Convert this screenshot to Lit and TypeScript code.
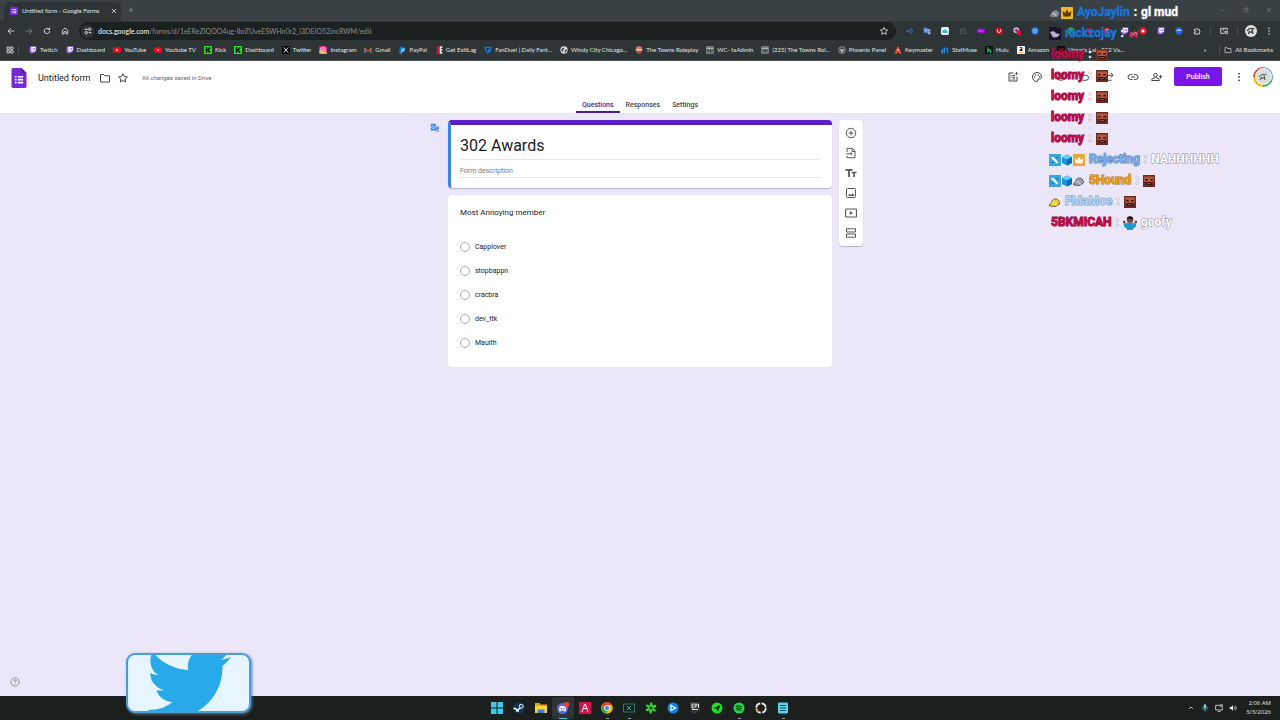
import { LitElement, html, css, svg, nothing, SVGTemplateResult } from "lit";
import { customElement } from "lit/decorators.js";
import { classMap } from "lit/directives/class-map.js";

type Art = SVGTemplateResult;

const line = (d: string, w = 2): Art =>
  svg`<path d=${d} fill="none" stroke="currentColor" stroke-width=${w} stroke-linejoin="round" />`;
const fill = (d: string, color = "currentColor"): Art => svg`<path d=${d} fill=${color} />`;

const pic = (art: Art, size = "s8") =>
  html`<svg class="pic ${size}" viewBox="0 0 24 24" aria-hidden="true">${art}</svg>`;

/* Interface glyphs */
const star = line("M12 3.5l2.6 5.6 6.1.7-4.5 4.2 1.2 6L12 17l-5.400 3 1.200-6L3.300 9.800l6.100-.7z");
const forms = svg`<path d="M5 0h10l6 6v16a2 2 0 0 1-2 2H5a2 2 0 0 1-2-2V2a2 2 0 0 1 2-2z" fill="#7627d6"/>
  <path d="M15 0l6 6h-6z" fill="#4d1a9c"/>
  <path d="M7 9.500h2v2H7zm3.500 0H17v2h-6.500zM7 13h2v2H7zm3.500 0H17v2h-6.500zM7 16.500h2v2H7zm3.500 0H17v2h-6.500z" fill="#fff"/>`;
const g = {
  back: line("M22 12H4M12 3l-9 9 9 9", 2.600),
  forward: line("M2 12h18M12 3l9 9-9 9", 2.600),
  reload: line("M20 12a8 8 0 1 1-2.500-5.800M20 2v6h-6", 2.800),
  home: line("M4 10l8-7 8 7v11h-5v-7H9v7H4z", 2.600),
  tune: svg`${line("M2 7h9M14 17h8", 3)}<circle cx="17" cy="7" r="3.500" fill="none" stroke="currentColor" stroke-width="3"/><circle cx="7" cy="17" r="3.500" fill="none" stroke="currentColor" stroke-width="3"/>`,
  close: line("M4 4l16 16M20 4L4 20", 3),
  plus: line("M12 3v18M3 12h18", 2.600),
  minimise: line("M4 12h16", 2.400),
  restore: line("M4 8h12v12H4zM8 8V4h12v12h-4", 2.400),
  puzzle: line("M4 7h5a2.500 2.500 0 1 1 5 0h5v5a2.500 2.500 0 1 1 0 5v4H4v-5a2.500 2.500 0 1 0 0-4z", 2.600),
  media: svg`${line("M13 19H2V4h20v6", 2.600)}${line("M15 13h7v6h-7zM7 9h6M20 20l2 2", 2.600)}`,
  dots: svg`<circle cx="12" cy="4" r="2.200" fill="currentColor"/><circle cx="12" cy="12" r="2.200" fill="currentColor"/><circle cx="12" cy="20" r="2.200" fill="currentColor"/>`,
  apps: line("M3 3h7v7H3zM14 3h7v7h-7zM3 14h7v7H3zM14 14h7v7h-7z", 2.400),
  folder: line("M3 5h6l2 2.500h10V20H3z"),
  aiForm: svg`${line("M13 4H4v16h16v-9M11 9h5M11 12.500h5M11 16h5")}${fill("M7 8h2v2H7zm0 3.500h2v2H7zM7 15h2v2H7zM19 1l1.200 2.800L23 5l-2.800 1.200L19 9l-1.200-2.800L15 5l2.800-1.200z")}`,
  palette: svg`${line("M12 3a9 9 0 1 0 0 18c1.500 0 2-1 1.600-2.200-.6-1.800.4-2.800 1.900-2.800H18c2 0 3-2 3-4.500C21 6.500 17 3 12 3z")}<circle cx="7" cy="12" r="1.500" fill="currentColor"/><circle cx="9.500" cy="8" r="1.500" fill="currentColor"/><circle cx="14.500" cy="8" r="1.500" fill="currentColor"/><circle cx="17.500" cy="11.500" r="1.500" fill="currentColor"/>`,
  eye: svg`${line("M1.500 12C5 3.500 19 3.500 22.500 12 19 20.500 5 20.500 1.500 12z")}<circle cx="12" cy="12" r="3.500" fill="none" stroke="currentColor" stroke-width="2"/>`,
  undo: line("M8 4L4 8.500 8 13M4 8.500h10a5 5 0 0 1 0 10H7"),
  redo: line("M16 4l4 4.500-4 4.500M20 8.500H10a5 5 0 0 0 0 10h7"),
  link: line("M10.500 7H7a5 5 0 0 0 0 10h3.500M13.500 7H17a5 5 0 0 1 0 10h-3.500M8 12h8"),
  addPerson: svg`<circle cx="9" cy="8" r="3.500" fill="none" stroke="currentColor" stroke-width="2"/>${line("M1.500 19v-1.500c0-3 4-4 7.500-4s7.500 1 7.500 4V19zM19 8v7M15.500 11.500h7")}`,
  addItem: svg`<circle cx="12" cy="12" r="9.500" fill="none" stroke="currentColor" stroke-width="2"/>${line("M12 7v10M7 12h10")}`,
  importItem: line("M4 10V2.500h10.500L20 8v13.500H4V17M14 3v6h6M3 13.500h11M11 10.500l3 3-3 3"),
  text: fill("M1 4h14v3.500H9.800V20H6.200V7.500H1zM13 9.500h10v3h-3.300V20h-3.400v-7.500H13z"),
  image: svg`<rect x="3" y="3" width="18" height="18" rx="2" fill="none" stroke="currentColor" stroke-width="2"/>${fill("M6 18l3.500-4.500 2.300 2.800 3.200-4.300L19 18z")}`,
  video: svg`<rect x="1" y="4" width="22" height="16" rx="2" fill="none" stroke="currentColor" stroke-width="2.400"/>${fill("M9.500 8v8l6.500-4z")}`,
  section: line("M3 3.500h18v6.500H3zM3 14h18v6.500H3z"),
  help: svg`<circle cx="12" cy="12" r="10" fill="none" stroke="currentColor" stroke-width="1.800"/>${line("M9 9.500c0-4 6-4 6 0 0 2.500-3 2.500-3 5.200M12 16.500v2.200", 1.800)}`,
  translate: svg`${fill("M2 2h11l4 16H2z", "#3f7fe0")}${fill("M12 7h10v15H13l3-5z", "#9dbdf0")}${line("M10.500 7.500a3.500 3.500 0 1 0 .5 3.500H8", 1.600)}${fill("M15 11h6v2h-1l-2 4-1.500-1 1.500-3h-3z", "#3766b8")}`,
  caret: line("M4 16l8-8 8 8", 3),
  mic: svg`<rect x="8" y="1" width="8" height="13" rx="4" fill="#7fd4dc"/><path d="M4 10c0 10 16 10 16 0M12 18v5" fill="none" stroke="#5fb4be" stroke-width="2.400"/>`,
  screen: line("M15 4H2v14h20v-7M8 22h9M17 2h5v6h-5z", 2.400),
  volume: svg`${fill("M2 9h4l6-5v16l-6-5H2z")}${line("M15 8c2 2 2 6 0 8M18.500 5c4 4 4 10 0 14", 2.200)}`,
};

/* Site and app marks */
const tile = (bg: string, inner: Art | typeof nothing = nothing, rx = 3): Art =>
  svg`<rect width="24" height="24" rx=${rx} fill=${bg} />${inner}`;
const disc = (bg: string, inner: Art | typeof nothing = nothing): Art =>
  svg`<circle cx="12" cy="12" r="11" fill=${bg} />${inner}`;
const twitch = svg`<path d="M5 1h17v13l-6 6h-4l-4 4v-4H2V5z" fill="#a970ff"/><path d="M7 3h13v10l-3 3h-5l-3 3v-3H7z" fill="#fff"/><path d="M11 6h2v6h-2zm5 0h2v6h-2z" fill="#7a3ee0"/>`;
const youtube = svg`<rect y="4" width="24" height="16" rx="5" fill="#f00a1c"/><path d="M10 8.500v7l6-3.500z" fill="#fff"/>`;
const kick = tile("#20e81c", fill("M5 3h5v6h2V7h2V3h5v6h-2v2h-2v2h2v2h2v6h-5v-4h-2v-2h-2v6H5z", "#071407"), 0);
const crown = (bg: string, c: string) => tile(bg, fill("M3 8l5 4 4-7 4 7 5-4-2 11H5z", c), 1);
const bird =
  "M23.953 4.570a10 10 0 01-2.825.775 4.958 4.958 0 002.163-2.723c-.951.555-2.005.959-3.127 1.184a4.920 4.920 0 00-8.384 4.482C7.690 8.095 4.067 6.130 1.640 3.162a4.822 4.822 0 00-.666 2.475c0 1.710.870 3.213 2.188 4.096a4.904 4.904 0 01-2.228-.616v.06a4.923 4.923 0 003.946 4.827 4.996 4.996 0 01-2.212.085 4.936 4.936 0 004.604 3.417 9.867 9.867 0 01-6.102 2.105c-.39 0-.779-.023-1.170-.067a13.995 13.995 0 007.557 2.209c9.053 0 13.998-7.496 13.998-13.985 0-.21 0-.42-.015-.63A9.935 9.935 0 0024 4.590z";
const serverBox = tile("#6d7678", svg`${line("M2 7h20", 2)}${fill("M5 11h4v4H5zm7 0h3v8h-3zm5 0h3v3h-3z", "#252b2d")}`);

const bookmarks: [string, Art][] = [
  ["Twitch", twitch],
  ["Dashboard", twitch],
  ["YouTube", youtube],
  ["Youtube TV", youtube],
  ["Kick", kick],
  ["Dashboard", kick],
  ["Twitter", tile("#050505", svg`<path d="M5 4l14 16M19 4L5 20" stroke="#fff" stroke-width="2.500"/>`, 1)],
  ["Instagram", svg`<rect width="24" height="24" rx="6" fill="#e1308a"/><path d="M0 14l24 5v5H6a6 6 0 0 1-6-6z" fill="#fb9a36"/><rect x="5" y="5" width="14" height="14" rx="4" fill="none" stroke="#fff" stroke-width="2"/><circle cx="12" cy="12" r="3.500" fill="none" stroke="#fff" stroke-width="2"/>`],
  ["Gmail", svg`<path d="M1 5h5v15H1z" fill="#4285f4"/><path d="M18 5h5v15h-5z" fill="#34a853"/><path d="M1 5l11 8 11-8v5l-11 8L1 10z" fill="#ea4335"/>`],
  ["PayPal", svg`<path d="M6 2h9c8 0 6 12-3 12H9l-1 6H2z" fill="#1b6fd8"/><path d="M11 7h8c5 2 2 11-5 11h-2l-1 5H7z" fill="#54c3f5"/>`],
  ["Get ExitLag", svg`<path d="M2 1h11v22H2l4-11z" fill="#c4122f"/><path d="M14 1h8v5h-3v4h3v4h-3v4h3v5h-8z" fill="#f4f4f4"/>`],
  ["FanDuel | Daily Fant...", svg`<path d="M1 2h22l-3 13-8 8-8-8z" fill="#1477e6"/><path d="M7 6h11l-2 4h-4l-1 8-3-4z" fill="#26323c"/>`],
  ["Windy City Chicago...", disc("#d9dcdc", fill("M5 8l6-4 2 5-4 4-1 6-4-5zM15 13l5-3 1 4-5 6-3-3z", "#4a5254"))],
  ["The Towns Roleplay", svg`<ellipse cx="12" cy="7" rx="9" ry="6" fill="#d97e5c"/><path d="M2 10h20v4H2z" fill="#f3e6dc"/><path d="M4 15h16l-3 8H7z" fill="#c44d3a"/>`],
  ["WC- txAdmin", serverBox],
  ["(225) The Towns Rol...", serverBox],
  ["Phoenix Panel", svg`<circle cx="12" cy="12" r="10" fill="none" stroke="#c6caca" stroke-width="2"/>${fill("M6 7l6 4 6-4-2 9-4 4-4-4z", "#c6caca")}`],
  ["Keymaster", svg`<path d="M12 1l5 8 5 14h-6l-4-6-4 6H2L7 9z" fill="#ee4b3c"/><path d="M10 9h4v4h-4z" fill="#fff"/>`],
  ["StatMuse", svg`<path d="M1 10h5v12H1zM8 5h4v17H8z" fill="#2f8fe8"/><path d="M14 3l8 3v16h-5V11h-3z" fill="#1d6fd0"/>`],
  ["Hulu", tile("#04120a", fill("M7 4h3v6c8-2 8 2 8 10h-3c0-6 0-8-5-6v6H7z", "#1ce783"), 1)],
  ["Amazon", tile("#fff", svg`${fill("M8 4h8v11h-3l-5-1v-5h5V6H8z", "#111")}<path d="M4 18q8 5 16 0" fill="none" stroke="#f90" stroke-width="2.500"/>`, 2)],
  ["Vimm's Lair: PS2 Va...", tile("#170508", fill("M4 5l8 14 8-14-4 2-4 7-4-7z", "#d6182c"), 1)],
];

const extensions: Art[] = [
  svg`<circle cx="7" cy="12" r="3" fill="#3d8be8"/><path d="M12 6c4 3 4 9 0 12M17 3c6 5 6 13 0 18" fill="none" stroke="#2f78d6" stroke-width="3"/>`,
  g.translate,
  tile("#e9f9fb", fill("M4 17c-3-6 3-8 4-7 2-5 10-3 9 2 5 0 4 6 1 6z", "#31bdd6"), 5),
  svg`<path d="M4 11h16v9H4zM4 9c3-7 10-1 16-6" fill="none" stroke="#596063" stroke-width="2.500"/>`,
  svg`<rect y="5" width="24" height="14" rx="3" fill="#a30bd8"/><path d="M5 11h9v2H5zm12 0h3v2h-3z" fill="#fff"/>`,
  disc("#c90f1e", svg`<path d="M7 7v5c0 6 10 6 10 0V7" fill="none" stroke="#fff" stroke-width="2.500"/>`),
  svg`<circle cx="10" cy="10" r="9" fill="#d9a5d8"/><circle cx="10" cy="10" r="4" fill="#5c3e7c"/><rect x="11" y="10" width="13" height="14" rx="3" fill="#e00b40"/>`,
  disc("#1f73dd", svg`<circle cx="12" cy="12" r="6" fill="none" stroke="#bfe0ff" stroke-width="2"/><path d="M8 12h8" stroke="#bfe0ff" stroke-width="2"/>`),
  tile("#17111f", fill("M3 8l6-2 7 5 6 1-5 6-9 1z", "#c9c2d6"), 0),
  disc("#23a559", fill("M5 12c4-5 10-5 14 0v4H5z", "#dff5e5")),
  svg`<path d="M12 22L2 11c0-9 8-9 10-4 2-5 10-5 10 4z" fill="#c61c50"/>`,
  disc("#cc1622", fill("M8 6h8v3h-5v3h5v6H8v-3h5v-1H8z", "#fff")),
  twitch,
  disc("#e0182d", fill("M8 8h8v8H8z", "#fff")),
  twitch,
  disc("#2463e8", fill("M4 13c2-7 14-7 16 0-4-3-12-3-16 0z", "#fff")),
];

const tasks: { name: string; art: Art; on?: boolean; run?: boolean }[] = [
  { name: "Start", art: fill("M0 0h11v11H0zM13 0h11v11H13zM0 13h11v11H0zM13 13h11v11H13z", "#3fc8ec") },
  { name: "Steam", art: svg`<circle cx="12" cy="12" r="11" fill="#12395c"/><path d="M1 12l9 4 7-7" fill="none" stroke="#e5eef5" stroke-width="3"/><circle cx="16.500" cy="8.500" r="4" fill="#1b4f79" stroke="#e5eef5" stroke-width="2"/><circle cx="9" cy="17" r="3" fill="#e5eef5"/>` },
  { name: "File Explorer", art: svg`<path d="M0 2h9l2 3h13v17H0z" fill="#e2a90f"/><path d="M0 8h24v14H0z" fill="#ffd43a"/><path d="M5 15h14v7H5z" fill="#2f89d8"/>` },
  { name: "Discord", on: true, art: svg`<circle cx="11" cy="13" r="11" fill="#5865f2"/><path d="M4 18c0-6 1-9 3-10h8c2 1 3 4 3 10l-3 1-1-2H8l-1 2z" fill="#fff"/><path d="M7.500 12h2.500v3H7.500zm5 0H15v3h-2.500z" fill="#5865f2"/><circle cx="19" cy="5" r="5.500" fill="#e8404a"/>` },
  { name: "Launcher", art: tile("#d3124e", svg`<path d="M6 20l5-15h2l5 15M8 13h8" fill="none" stroke="#fff" stroke-width="2"/>`, 1) },
  { name: "Chrome", run: true, art: svg`<circle cx="12" cy="12" r="11.500" fill="#fbbc05"/><path d="M2 6a11.500 11.500 0 0 1 20 0H12l-5 9z" fill="#ea4335"/><path d="M2 6a11.500 11.500 0 0 0 8 17.300l5-8.300-7 0z" fill="#34a853"/><circle cx="12" cy="12" r="5.500" fill="#fff"/><circle cx="12" cy="12" r="4.200" fill="#3b82ea"/>` },
  { name: "Capture", run: true, art: svg`<rect x="1" y="4" width="22" height="16" fill="#12221f" stroke="#3a7c71" stroke-width="1.800"/><path d="M8 8l8 8M16 8l-8 8" stroke="#4aa596" stroke-width="2"/>` },
  { name: "Razer", art: svg`<path d="M12 0q5 3 2 8 5-4 9-1-1 5-7 5 5 1 6 6-5 3-8-3 1 5-2 9-5-3-3-8-4 4-8 1 1-5 7-5-6-1-7-6 5-3 9 2-1-5 2-8z" fill="#35d22f"/><circle cx="12" cy="12" r="2.500" fill="#1c1f1e"/>` },
  { name: "Battle.net", art: disc("#0f86ea", svg`<path d="M8 5v13M8 7l9 5-9 5" fill="none" stroke="#fff" stroke-width="2.400"/>`) },
  { name: "Epic Games", art: svg`<path d="M2 0h20v18l-10 6-10-6z" fill="#343638"/><path d="M6 4h4M6 4v8h4M6 8h3M12 12V4h4v4h-4M19 4v8" fill="none" stroke="#fff" stroke-width="1.600"/><path d="M6 15h12" stroke="#fff" stroke-width="1.600"/>` },
  { name: "Navigator", art: disc("#22dd36", fill("M5 12l14-6-5 13-3-5z", "#0b2e10")) },
  { name: "Spotify", run: true, art: disc("#1fdd4c", svg`<path d="M5 8.500q8-2 14 1M6 12.500q7-2 12 1M7 16q6-1.500 10 1" fill="none" stroke="#0b2010" stroke-width="2"/>`) },
  { name: "Recorder", art: svg`<circle cx="12" cy="12" r="9.500" fill="none" stroke="#f2f2f2" stroke-width="3.500" stroke-dasharray="12 3"/><path d="M3 12a9 9 0 0 0 4 8" fill="none" stroke="#f08a4c" stroke-width="3.500"/>` },
  { name: "Notepad", run: true, art: svg`<rect x="2" y="1" width="20" height="22" rx="2" fill="#5bd0ea"/><path d="M6 7h12M6 12h12M6 17h12" stroke="#12536a" stroke-width="2"/>` },
];

/* Chat marks */
const face = tile("#6b2920", svg`<path d="M2 3h20v9l-3 2H5l-3-2z" fill="#b9593e"/><path d="M4 7l6 2v2H4zm16 0l-6 2v2h6z" fill="#3b1512"/><path d="M6 16q6-4 12 0v3H6z" fill="#1f0b0c"/><path d="M8 17h8v1H8z" fill="#d8a58e"/>`, 0);
const cap = (c: string) => svg`<path d="M5 14c0-11 17-11 16 2l-8 5-12-1c-1-4 2-5 4-6z" fill=${c} stroke="#3f4148" stroke-width="1.500"/><path d="M5 14c5-2 9 1 10 5" fill="none" stroke="#fff" stroke-width="1.500"/>`;
const clip = tile("#35a8dc", svg`<path d="M4 6h5l10 11-3 2L6 10z" fill="#fff"/><path d="M15 6h4v3h-4zM5 15h4v3H5z" fill="#1273a5"/>`, 0);
const cube = svg`<path d="M12 1l10 5v12l-10 5-10-5V6z" fill="#1c93d8"/><path d="M12 1l10 5-10 5L2 6z" fill="#65cdf5"/><path d="M12 11l10-5v12l-10 5z" fill="#0d6cae"/>`;
const shrug = svg`<path d="M1 11l4 2 3-2h8l3 2 4-2-1 8-4 2-1 3H7l-1-3-4-2z" fill="#2596c8"/><circle cx="12" cy="6.500" r="5.500" fill="#7b4a3b"/><path d="M6.500 5c0-6 11-6 11 0z" fill="#20191a"/><path d="M0 8h4v4H0zm20 0h4v4h-4z" fill="#7b4a3b"/>`;
const squiggle = svg`<path d="M2 21l3-15 4 9 4-12 2 11 7-10-5 17-5-7-4 7-2-5z" fill="#e0315e"/><path d="M8 9l3 4M15 8l2 4" stroke="#ffc2cf" stroke-width="2"/>`;

const chat: { badges?: Art[]; user: string; tone: string; emote?: Art; text?: string }[] = [
  { badges: [cap("#85898f"), crown("#f1b62c", "#5a3b05")], user: "AyoJaylin", tone: "blue", text: "gl mud" },
  { badges: [tile("#1a1330", fill("M2 8l7-2 6 5 7 1-5 6-9 1z", "#b9b1cc"), 0)], user: "rackzojay", tone: "blue", emote: squiggle },
  ...Array.from({ length: 5 }, () => ({ user: "loomy", tone: "crimson", emote: face })),
  { badges: [clip, cube, crown("#e7a73a", "#fff5dc")], user: "Rejecting", tone: "steel", text: "NAHHHHHH" },
  { badges: [clip, cube, cap("#9a9db0")], user: "5Hound", tone: "amber", emote: face },
  { badges: [cap("#f0d021")], user: "FMaMoe", tone: "pale", emote: face },
  { user: "5BKMICAH", tone: "crimson", emote: shrug, text: "goofy" },
];

@customElement("app-root")
export class AppRoot extends LitElement {
  static styles = css`
    :host {
      display: flex;
      flex-direction: column;
      min-height: 100vh;
      position: relative;
      overflow: hidden;
      background: #ebe7f8;
      color: #202124;
      font-family: Roboto, "Liberation Sans", sans-serif;
      font-size: 7px;
      line-height: 10px;
    }
    * { box-sizing: border-box; }
    button, input {
      margin: 0;
      padding: 0;
      border: 0;
      background: none;
      color: inherit;
      font: inherit;
      outline: none;
    }
    button { display: flex; align-items: center; justify-content: center; flex: none; }
    a { color: inherit; text-decoration: none; }
    .pic { display: block; flex: none; }
    .s6 { width: 6px; height: 6px; }
    .s8 { width: 8px; height: 8px; }
    .s10 { width: 10px; height: 10px; }
    .s12 { width: 12px; height: 12px; }
    .s14 { width: 14px; height: 14px; }
    .s20 { width: 20px; height: 20px; }

    .chrome {
      background: #2d3537;
      color: #e3e6e6;
      font-family: Lato, "Open Sans", sans-serif;
      border-bottom: 1px solid #4b5355;
    }
    .tabstrip { display: flex; height: 21px; padding: 2px 0 0 4px; background: #394144; }
    .tab {
      display: flex;
      align-items: center;
      gap: 4px;
      width: 117px;
      padding: 0 4px 2px 6px;
      border-radius: 5px 5px 0 0;
      background: #2d3537;
      font-size: 6px;
      white-space: nowrap;
    }
    .tab .label { flex: 1; }
    .newtab { width: 20px; height: 16px; color: #9da3a4; }
    .window { display: flex; margin-left: auto; color: #737a7c; }
    .window button { width: 23px; height: 16px; }
    .toolbar { display: flex; align-items: center; height: 20px; padding: 0 2px; }
    .nav { width: 18px; height: 18px; }
    .dim { color: #798082; }
    .omnibox {
      display: flex;
      align-items: center;
      flex: 1;
      height: 18px;
      margin: 0 4px 0 5px;
      padding: 0 7px 0 2px;
      gap: 4px;
      border-radius: 9px;
      background: #1b2021;
      font-size: 7px;
    }
    .site { width: 13px; height: 13px; border-radius: 50%; background: #2d3537; }
    .url { flex: 1; color: #8b9293; white-space: nowrap; }
    .url b { color: #eef0f0; font-weight: 500; }
    .rule { width: 1px; height: 8px; background: #4a5254; margin: 0 4px; }
    .person { width: 12px; height: 12px; border-radius: 50%; background: #dfe1e1; color: #333; }
    .bookbar { display: flex; align-items: center; height: 19px; padding: 0 7px 1px 6px; font-size: 6px; white-space: nowrap; }
    .books { display: flex; gap: 8px; margin: 0; padding: 0 0 0 6px; list-style: none; flex: 1; min-width: 0; overflow: hidden; }
    .book { display: flex; align-items: center; gap: 3px; }
    .more { width: 20px; height: 16px; }

    .header { background: #fff; height: 52px; display: flex; flex-direction: column; justify-content: space-between; }
    .bar { display: flex; align-items: center; height: 34px; padding: 0 7px 0 9px; color: #444746; }
    .name { width: 54px; margin: 0 4px 0 9px; font-size: 9px; line-height: 14px; color: #202124; }
    .act { width: 18px; height: 18px; }
    .saved { margin-left: 10px; flex: 1; font-size: 6px; color: #5f6368; }
    .tools { display: flex; align-items: center; align-self: flex-start; height: 31px; }
    .edit { display: flex; gap: 6px; }
    .publish {
      width: 48px;
      height: 19px;
      margin: 0 8px;
      border-radius: 2px;
      background: #7816ea;
      color: #fff;
      font-weight: 500;
    }
    .avatar {
      width: 20px;
      height: 20px;
      margin-left: 5px;
      border-radius: 50%;
      background: conic-gradient(#4285f4 0 25%, #34a853 0 50%, #fbbc05 0 75%, #ea4335 0);
    }
    .avatar .inner { display: grid; place-items: center; width: 17px; height: 17px; border-radius: 50%; background: #d9dddb; border: 1px solid #fff; }
    .views { display: flex; justify-content: center; height: 16px; }
    .view { height: 16px; padding: 0 6px; font-weight: 500; color: #444746; border-bottom: 2px solid transparent; line-height: 16px; }
    .view.on { color: #4c1d9a; border-color: #4c1d9a; }

    .canvas { flex: 1; display: flex; flex-direction: column; justify-content: space-between; }
    .grid { display: grid; grid-template-columns: 1fr minmax(0, 384px) 1fr; gap: 7px; padding-top: 7px; align-items: start; }
    .trans { justify-self: end; width: 12px; height: 16px; color: #fff; }
    .form { display: flex; flex-direction: column; gap: 7px; }
    .card { background: #fff; border-radius: 4px; padding: 12px; box-shadow: 0 1px 1px #b9b4cc; }
    .head {
      position: relative;
      height: 68px;
      border-top: 5px solid #5d1fcb;
      border-left: 3px solid #3b86dc;
      padding: 10px 12px 11px 9px;
    }
    .title, .desc { display: block; width: 100%; border-bottom: 1px solid #e8e8ec; }
    .title { height: 25px; padding-bottom: 4px; font-size: 16px; line-height: 20px; }
    .desc { height: 18px; padding-top: 4px; }
    .desc::placeholder { color: #777b80; opacity: 1; }
    .question { margin: 0; border: 0; min-width: 0; height: 172px; box-shadow: 0 0 1px #d3cfe0; }
    .ask { float: left; width: 100%; padding: 0; margin-bottom: 17px; font-size: 8px; line-height: 11px; }
    .option { display: flex; align-items: center; gap: 5px; clear: both; height: 24px; }
    .option input { appearance: none; width: 10px; height: 10px; border: 1px solid #a9abae; border-radius: 50%; }
    .side {
      display: flex;
      flex-direction: column;
      width: 24px;
      padding: 3px 0;
      border-radius: 4px;
      background: #fff;
      color: #55585b;
      box-shadow: 0 1px 1px #b9b4cc;
    }
    .side button { width: 24px; height: 20px; }
    .help { width: 11px; height: 11px; margin: 0 0 9px 9px; color: #77738a; }

    .taskbar { position: relative; display: flex; align-items: center; justify-content: center; height: 24px; background: #1b1f1e; color: #e4e6e6; }
    .task { position: relative; width: 22px; height: 22px; border-radius: 3px; }
    .task.on { background: #303437; }
    .task.on::after, .task.run::after {
      content: "";
      position: absolute;
      left: 50%;
      bottom: 0;
      width: 3px;
      height: 1px;
      margin-left: -1px;
      background: #9ba0a0;
    }
    .task.on::after { width: 8px; margin-left: -4px; background: #4cc8f0; }
    .tray { position: absolute; right: 9px; top: 0; height: 24px; display: flex; align-items: center; gap: 4px; }
    .tray button { width: 10px; height: 16px; }
    .clock { margin-left: 4px; text-align: right; font: 6px/9px "Open Sans", "Noto Sans", sans-serif; }

    .chat {
      position: absolute;
      top: 2px;
      left: 1049px;
      margin: 0;
      padding: 0;
      list-style: none;
      font-size: 12px;
      line-height: 21px;
      font-weight: 700;
      white-space: nowrap;
      pointer-events: none;
    }
    .msg { display: flex; align-items: center; height: 21px; }
    .badges { display: flex; margin-right: 2px; }
    .user { padding: 0 4px 0 2px; -webkit-text-stroke: 1px #5d6480; paint-order: stroke fill; }
    .said { display: flex; align-items: center; color: #fff; -webkit-text-stroke: 1px #8d8a99; paint-order: stroke fill; }
    .said span, .said .pic { margin-left: 4px; }
    .blue { color: #1f78d8; -webkit-text-stroke-color: #1c4f8c; }
    .crimson { color: #c00b48; -webkit-text-stroke-color: #8e0636; }
    .steel { color: #7db0ea; -webkit-text-stroke-color: #4d79ad; }
    .amber { color: #eda321; -webkit-text-stroke-color: #a66c10; }
    .pale { color: #b8d5f2; -webkit-text-stroke-color: #6e93bd; }

    .social {
      position: absolute;
      left: 126px;
      bottom: 7px;
      width: 125px;
      height: 60px;
      display: flex;
      align-items: center;
      justify-content: center;
      overflow: hidden;
      border: 2px solid #469fdc;
      border-radius: 9px;
      background: #e6f5ff;
      box-shadow: 1px 1px 3px #6f7590;
    }
    .social svg { flex: none; width: 84px; height: 70px; }
  `;

  private iconButton(label: string, art: Art, cls: string, size = "s10") {
    return html`<button class=${cls} aria-label=${label}>${pic(art, size)}</button>`;
  }

  private chrome() {
    return html`<div class="chrome">
      <div class="tabstrip">
        <div class="tab">
          ${pic(svg`<rect width="24" height="24" rx="3" fill="#7627d6"/><path d="M5 6h3v3H5zm5 0h9v3h-9zM5 11h3v3H5zm5 0h9v3h-9zM5 16h3v3H5zm5 0h9v3h-9z" fill="#e6d6fa"/>`)}
          <span class="label">Untitled form - Google Forms</span>
          ${this.iconButton("Close tab", g.close, "", "s6")}
        </div>
        ${this.iconButton("New tab", g.plus, "newtab", "s6")}
        <div class="window">
          ${this.iconButton("Minimise", g.minimise, "", "s6")}
          ${this.iconButton("Restore", g.restore, "", "s6")}
          ${this.iconButton("Close window", g.close, "", "s6")}
        </div>
      </div>
      <div class="toolbar">
        ${this.iconButton("Back", g.back, "nav", "s8")}
        ${this.iconButton("Forward", g.forward, "nav dim", "s8")}
        ${this.iconButton("Reload", g.reload, "nav", "s8")}
        ${this.iconButton("Home", g.home, "nav", "s8")}
        <div class="omnibox">
          ${this.iconButton("Site information", g.tune, "site", "s8")}
          <span class="url"><b>docs.google.com</b>/forms/d/1eEReZIQOO4ug-IbrZUveESWHn0r2_i3DEIO52incRWM/edit</span>
          ${this.iconButton("Bookmark this page", star, "", "s10")}
        </div>
        ${extensions.map((art, i) => this.iconButton(`Extension ${i + 1}`, art, "nav", "s8"))}
        ${this.iconButton("Extensions", g.puzzle, "nav", "s8")}
        <span class="rule"></span>
        ${this.iconButton("Media controls", g.media, "nav", "s8")}
        <span class="rule"></span>
        <button class="nav" aria-label="Profile"><span class="person">${pic(line("M4 12c4-6 10-6 15-4M9 12l-2 6M14 9l2 9M8 14h8", 2.500), "s12")}</span></button>
        ${this.iconButton("Menu", g.dots, "nav", "s8")}
      </div>
      <nav class="bookbar">
        ${this.iconButton("Apps", g.apps, "", "s8")}
        <span class="rule"></span>
        <ul class="books">
          ${bookmarks.map(([name, art]) => html`<li><a class="book" href="#">${pic(art)}${name}</a></li>`)}
        </ul>
        <button class="more" aria-label="More bookmarks">»</button>
        <span class="rule"></span>
        <a class="book" href="#">${pic(g.folder)}All Bookmarks</a>
      </nav>
    </div>`;
  }

  private header() {
    return html`<header class="header">
      <div class="bar">
        ${pic(forms, "s20")}
        <input class="name" aria-label="Form name" value="Untitled form" />
        ${this.iconButton("Move to folder", g.folder, "act", "s12")}
        ${this.iconButton("Star", star, "act", "s12")}
        <span class="saved">All changes saved in Drive</span>
        <div class="tools">
          <div class="edit">
            ${this.iconButton("Suggest edits", g.aiForm, "act", "s12")}
            ${this.iconButton("Theme", g.palette, "act", "s12")}
            ${this.iconButton("Preview", g.eye, "act", "s12")}
            ${this.iconButton("Undo", g.undo, "act", "s12")}
            ${this.iconButton("Redo", g.redo, "act", "s12")}
            ${this.iconButton("Copy link", g.link, "act", "s12")}
            ${this.iconButton("Share", g.addPerson, "act", "s12")}
          </div>
          <button class="publish">Publish</button>
          ${this.iconButton("More", g.dots, "act")}
          <button class="avatar" aria-label="Account"><span class="inner">${pic(line("M4 12c4-6 10-6 15-4M9 12l-3 6M14 9l2 9M8 14h8"), "s12")}</span></button>
        </div>
      </div>
      <nav class="views">
        ${["Questions", "Responses", "Settings"].map(
          (v, i) => html`<a href="#" class=${classMap({ view: true, on: i === 0 })}>${v}</a>`,
        )}
      </nav>
    </header>`;
  }

  private canvas() {
    return html`<main class="canvas">
      <div class="grid">
        ${this.iconButton("Translate", g.translate, "trans")}
        <div class="form">
          <section class="card head">
            <input class="title" aria-label="Form title" value="302 Awards" />
            <input class="desc" aria-label="Form description" placeholder="Form description" />
          </section>
          <fieldset class="card question">
            <legend class="ask">Most Annoying member</legend>
            ${["Capplover", "stopbappn", "cracbra", "dev_ttk", "Mauith"].map(
              (o) => html`<label class="option"><input type="radio" name="member" value=${o} />${o}</label>`,
            )}
          </fieldset>
        </div>
        <div class="side">
          ${this.iconButton("Add question", g.addItem, "", "s12")}
          ${this.iconButton("Import questions", g.importItem, "", "s12")}
          ${this.iconButton("Add title and description", g.text, "", "s12")}
          ${this.iconButton("Add image", g.image, "", "s12")}
          ${this.iconButton("Add video", g.video, "", "s12")}
          ${this.iconButton("Add section", g.section, "", "s12")}
        </div>
      </div>
      ${this.iconButton("Help", g.help, "help")}
    </main>`;
  }

  private taskbar() {
    return html`<footer class="taskbar">
      ${tasks.map(
        (t) => html`<button class=${classMap({ task: true, on: !!t.on, run: !!t.run })} aria-label=${t.name}>${pic(t.art, "s12")}</button>`,
      )}
      <div class="tray">
        ${this.iconButton("Hidden icons", g.caret, "", "s6")}
        ${this.iconButton("Microphone", g.mic, "", "s8")}
        ${this.iconButton("Display", g.screen, "", "s8")}
        ${this.iconButton("Volume", g.volume, "", "s8")}
        <div class="clock"><div>2:06 AM</div><div>3/3/2026</div></div>
      </div>
    </footer>`;
  }

  render() {
    return html`
      ${this.chrome()} ${this.header()} ${this.canvas()} ${this.taskbar()}
      <ul class="chat">
        ${chat.map(
          (m) => html`<li class="msg">
            ${m.badges ? html`<span class="badges">${m.badges.map((b) => pic(b, "s12"))}</span>` : nothing}
            <span class="user ${m.tone}">${m.user}</span>
            <span class="said">:${m.emote ? pic(m.emote, m.text ? "s14" : "s12") : nothing}${m.text ? html`<span>${m.text}</span>` : nothing}</span>
          </li>`,
        )}
      </ul>
      <div class="social"><svg viewBox="0 2 24 20" role="img" aria-label="Twitter">${fill(bird, "#27a9ea")}</svg></div>
    `;
  }
}
